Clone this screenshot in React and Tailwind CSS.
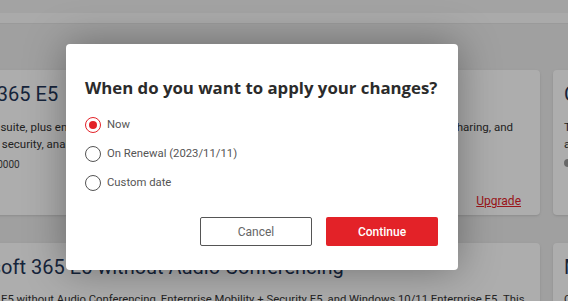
import React, { useState } from 'react';

const options = [
  { id: 'now', label: 'Now' },
  { id: 'renewal', label: 'On Renewal (2023/11/11)' },
  { id: 'custom', label: 'Custom date' },
];

const Radio = ({ checked }) => (
  <span
    className={`flex items-center justify-center w-[16px] h-[16px] rounded-full ${
      checked ? 'border-[1.5px] border-[#e32228]' : 'border border-[#555]'
    }`}
  >
    {checked && <span className="w-[8px] h-[8px] rounded-full bg-[#e32228]" />}
  </span>
);

const App = () => {
  const [choice, setChoice] = useState('now');

  return (
    <div className="relative w-full h-[301px] overflow-hidden bg-[#ececec] font-['Roboto',sans-serif]">
      {/* page behind the dialog */}
      <div className="h-[13px] bg-[#f0f0f0]" />
      <div className="h-[11px] bg-[#fbfbfb] border-b border-[#e4e4e4]" />

      <div className="flex flex-col gap-[28px] mt-[46px] ml-[-76px]">
        <div className="flex gap-[13px]">
          <div className="w-[616px] h-[145px] shrink-0 bg-white rounded-[4px] shadow-sm px-[16px] pt-[12px] relative">
            <h2 className="text-[20px] leading-[24px] text-[#1f3557] whitespace-nowrap">Office 365 E5</h2>
            <p className="mt-[13px] pr-[11px] flex justify-between text-[11.5px] leading-[17px] text-[#333] whitespace-nowrap">
              <span className="-ml-[2px]">Office 365's suite, plus enterprise-grade capabilities</span>
              <span>for meetings, voice, email, file sharing, and</span>
            </p>
            <p className="-ml-[3px] text-[11.5px] leading-[17px] text-[#333] whitespace-nowrap">
              advanced IT security, analytics and compliance tools.
            </p>
            <p className="mt-[5px] text-[10px] leading-[14px] text-[#444] whitespace-nowrap">Product ID: 10000</p>
            <a className="absolute right-[19px] bottom-[6px] text-[12px] leading-[16px] text-[#e32228] underline">
              Upgrade
            </a>
          </div>
          <div className="w-[200px] h-[145px] shrink-0 bg-white rounded-[4px] shadow-sm px-[11px] pt-[12px]">
            <h2 className="text-[20px] leading-[24px] text-[#1f3557] whitespace-nowrap">Office 365 E3</h2>
            <p className="mt-[13px] text-[11.5px] leading-[17px] text-[#333]">The productivity suite</p>
            <p className="text-[11.5px] leading-[17px] text-[#333]">and services</p>
            <div className="mt-[6px] w-[8px] h-[8px] rounded-full bg-[#999]" />
          </div>
        </div>
        <div className="flex gap-[13px]">
          <div className="w-[616px] h-[80px] shrink-0 bg-white rounded-[4px] shadow-sm px-[16px] pt-[12px]">
            <h2 className="text-[20px] leading-[24px] text-[#1f3557] whitespace-nowrap">
              Microsoft 365 E5 without Audio Conferencing
            </h2>
            <p className="mt-[12px] pl-[7px] text-[11.3px] leading-[17px] text-[#333] whitespace-nowrap">
              Office 365 E5 without Audio Conferencing, Enterprise Mobility + Security E5, and Windows 10/11 Enterprise E5. This
            </p>
          </div>
          <div className="w-[200px] h-[80px] shrink-0 bg-white rounded-[4px] shadow-sm px-[11px] pt-[12px]">
            <h2 className="text-[20px] leading-[24px] text-[#1f3557] whitespace-nowrap">Microsoft 365</h2>
            <p className="mt-[12px] text-[11.3px] leading-[17px] text-[#333]">Cloud services</p>
          </div>
        </div>
      </div>

      {/* overlay */}
      <div className="absolute inset-0 bg-black/[0.32]" />

      {/* dialog */}
      <div className="absolute left-[66px] top-[44px] w-[392px] h-[226px] bg-white rounded-[4px] shadow-[0_0_40px_rgba(0,0,0,0.35)] pl-[19px] pr-[20px] pt-[33px]">
        <h1 className="font-['Open_Sans',sans-serif] font-bold text-[16.8px] leading-[22px] text-[#2b2b2b] whitespace-nowrap">
          When do you want to apply your changes?
        </h1>
        <div className="mt-[18px] flex flex-col gap-[13px]">
          {options.map((o) => (
            <label
              key={o.id}
              onClick={() => setChoice(o.id)}
              className="flex items-center gap-[6px] h-[16px] cursor-pointer"
            >
              <Radio checked={choice === o.id} />
              <span className="text-[11.3px] text-[#555]">{o.label}</span>
            </label>
          ))}
        </div>
        <div className="mt-[26px] flex justify-end gap-[14px]">
          <button className="w-[112px] h-[29px] border border-[#555] rounded-[2px] text-[12px] text-[#666] bg-white">
            Cancel
          </button>
          <button className="w-[112px] h-[29px] rounded-[2px] text-[12px] font-medium text-white bg-[#e32228]">
            Continue
          </button>
        </div>
      </div>
    </div>
  );
};

export default App;
